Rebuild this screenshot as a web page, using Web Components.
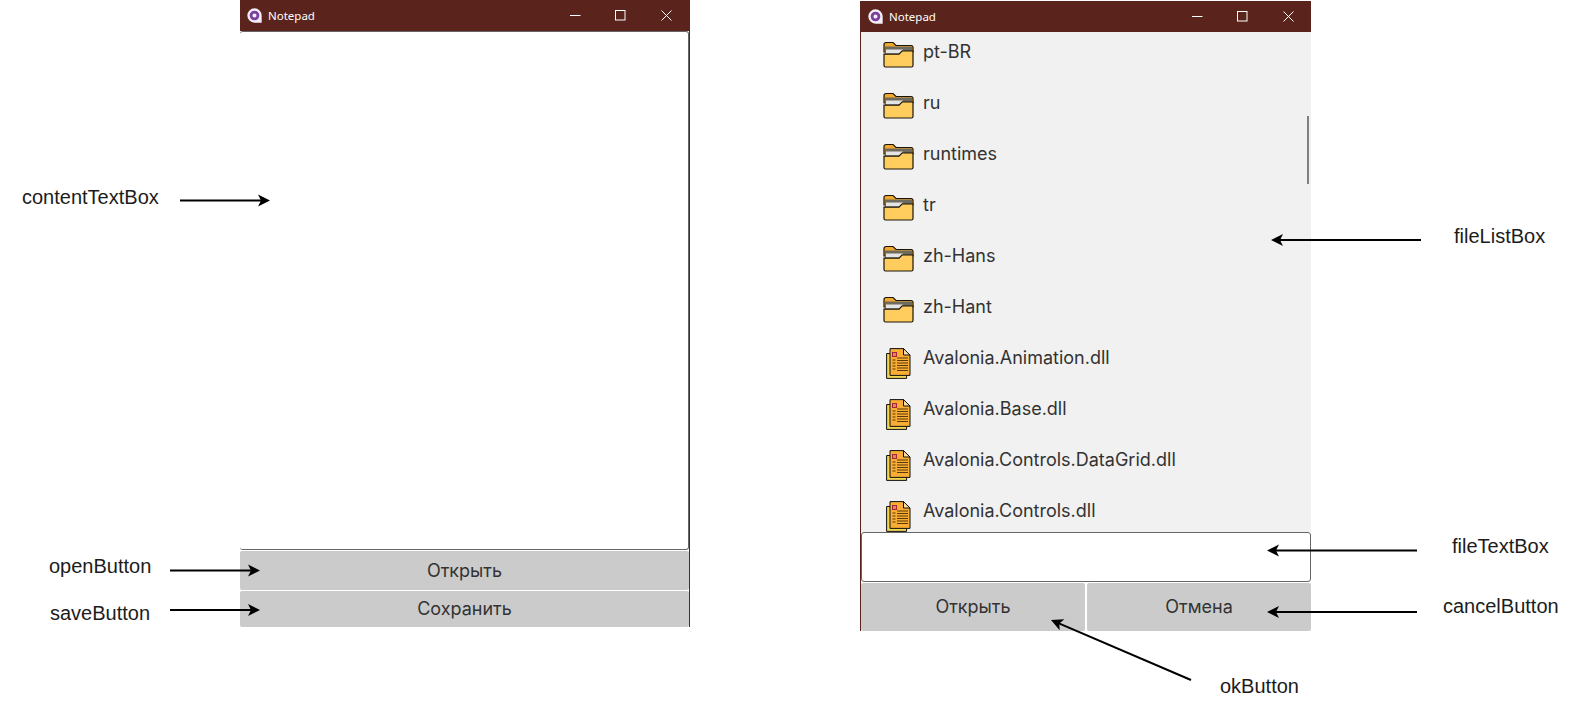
<!DOCTYPE html>
<html lang="ru"><head><meta charset="utf-8"><title>Notepad</title>
<style>
html,body{margin:0;padding:0;background:#fff}
body{width:1591px;height:701px;overflow:hidden;position:relative;font-family:"Inter","Liberation Sans",sans-serif}
</style></head><body>
<doc-canvas>
  <app-window style="--x:240px;--y:0px;--w:450px;--h:627px;--bl:0;--br:1px">
    <text-field grow style="--lb:0"></text-field>
    <action-row style="--h:39px;--mt:1px;--w2:449px"><action-button>Открыть</action-button></action-row>
    <action-row style="--h:36px;--mt:1px;--w2:449px"><action-button>Сохранить</action-button></action-row>
  </app-window>
  <app-window style="--x:860px;--y:1px;--w:451px;--h:630px;--bl:1px;--br:0">
    <file-list>
      <file-row kind="folder">pt-BR</file-row>
      <file-row kind="folder">ru</file-row>
      <file-row kind="folder">runtimes</file-row>
      <file-row kind="folder">tr</file-row>
      <file-row kind="folder">zh-Hans</file-row>
      <file-row kind="folder">zh-Hant</file-row>
      <file-row kind="file">Avalonia.Animation.dll</file-row>
      <file-row kind="file">Avalonia.Base.dll</file-row>
      <file-row kind="file">Avalonia.Controls.DataGrid.dll</file-row>
      <file-row kind="file">Avalonia.Controls.dll</file-row>
    </file-list>
    <text-field style="--fh:50px"></text-field>
    <action-row style="--h:48px;--mt:1px;--gap:2px;--w2:450px">
      <action-button>Открыть</action-button>
      <action-button>Отмена</action-button>
    </action-row>
  </app-window>
  <call-out style="--x:22px;--y:186px">contentTextBox</call-out>
  <call-out style="--x:49px;--y:555px">openButton</call-out>
  <call-out style="--x:50px;--y:602px">saveButton</call-out>
  <call-out style="--x:1454px;--y:225px">fileListBox</call-out>
  <call-out style="--x:1452px;--y:535px">fileTextBox</call-out>
  <call-out style="--x:1443px;--y:595px">cancelButton</call-out>
  <call-out style="--x:1220px;--y:675px">okButton</call-out>
  <arrow-line x1="180" y1="200.5" x2="270" y2="200.5"></arrow-line>
  <arrow-line x1="170" y1="570.5" x2="260" y2="570.5"></arrow-line>
  <arrow-line x1="170" y1="610" x2="260" y2="610"></arrow-line>
  <arrow-line x1="1421" y1="240" x2="1271" y2="240"></arrow-line>
  <arrow-line x1="1417" y1="550.5" x2="1267" y2="550.5"></arrow-line>
  <arrow-line x1="1417" y1="612" x2="1267" y2="612"></arrow-line>
  <arrow-line x1="1191" y1="680" x2="1051" y2="620"></arrow-line>
</doc-canvas>
<script>
function el(name, css, html, extra){
  customElements.define(name, class extends HTMLElement{
    constructor(){super();const r=this.attachShadow({mode:'open'});r.innerHTML='<style>'+css+'</style>'+html;}
    connectedCallback(){extra&&extra(this);}
  });
}
el('doc-canvas',':host{display:block;position:relative;width:1591px;height:701px}','<slot></slot>');

el('title-bar',`:host{display:flex;align-items:center;height:31px;flex:none;background:#5a231b;color:#fff;font:11.5px "Noto Sans","Open Sans",sans-serif}
 .logo{width:15px;height:15px;margin:0 6px 0 7px;flex:none}
 .t{flex:1}
 .b{width:45.5px;height:31px;display:flex;align-items:center;justify-content:center;flex:none}
 svg{display:block}`,
 `<svg class="logo" viewBox="0 0 14 14"><path d="M7 .3a6.700 6.700 0 0 0 0 13.400h6.700V7A6.700 6.700 0 0 0 7 .3z" fill="#f3eef6"/><circle cx="7" cy="7" r="3.200" fill="none" stroke="#7c3f9e" stroke-width="2.600"/></svg>
 <span class="t">Notepad</span>
 <span class="b"><svg width="11" height="11" viewBox="0 0 11 11"><path d="M0 5.500h10.500" stroke="#fff" stroke-width="1"/></svg></span>
 <span class="b"><svg width="11" height="11" viewBox="0 0 11 11"><rect x=".5" y=".5" width="9.500" height="9.500" fill="none" stroke="#fff"/></svg></span>
 <span class="b"><svg width="11" height="11" viewBox="0 0 11 11"><path d="M.5.5l10 10M10.500.5l-10 10" stroke="#fff" stroke-width="1" fill="none"/></svg></span>`);

el('app-window',`:host{position:absolute;left:var(--x);top:var(--y);width:var(--w);height:var(--h);display:flex;flex-direction:column;box-sizing:border-box;border-left:var(--bl) solid #5a231b;border-right:var(--br) solid #5a231b;background:#fff}
 .c{flex:1;display:flex;flex-direction:column;min-height:0}`,
 `<title-bar></title-bar><div class="c"><slot></slot></div>`);

el('text-field',`:host{display:block;flex:0 0 var(--fh,auto);box-sizing:border-box;background:#fff;border:1px solid #666;border-left-width:var(--lb,1px);border-radius:3px}
 :host([grow]){flex:1 1 auto}`,'<slot></slot>');

el('action-row',`:host{display:flex;flex:none;height:var(--h);margin-top:var(--mt);gap:var(--gap,0);width:var(--w2)}`,'<slot></slot>');

el('action-button',`:host{flex:1 1 0;display:flex;align-items:center;justify-content:center;background:#cbcbcb;color:#333;border-radius:2px;padding-bottom:1px;box-sizing:border-box;font:18px "Inter","Liberation Sans",sans-serif;white-space:nowrap}`,'<slot></slot>');

el('file-list',`:host{display:block;flex:1;min-height:0;overflow:hidden;background:#f1f1f1;position:relative}
 .bar{position:absolute;right:2px;top:84px;width:2px;height:68px;background:#808080}`,
 '<slot></slot><div class="bar"></div>');

const FOLDER=`<svg width="31" height="28" viewBox="0 0 31 28"><path d="M1 4.500a2 2 0 0 1 2-2h7l3 3h15a2 2 0 0 1 2 2V12H1z" fill="#f0a92e" stroke="#1c1408" stroke-width="1.200"/><rect x="2" y="6.500" width="27" height="8" fill="#6f6a5e"/><path d="M3 9.500h17l-3 4H3z" fill="#e4e4e2"/><path d="M1 14.200h15l3-3.200h11v14.500a1.500 1.500 0 0 1-1.500 1.500h-26a1.500 1.500 0 0 1-1.500-1.500z" fill="#ffcd5e" stroke="#1c1408" stroke-width="1.200"/></svg>`;
const FILE=`<svg width="25" height="31" viewBox="0 0 25 31"><path d="M.6 5.500h5v-1h15v25.900H.6z" fill="#f1d652" stroke="#111"/><path d="M4 .6h13.500L24 7v20.400H4z" fill="#f9ad35" stroke="#111"/><path d="M17.500.6V7H24z" fill="#fde0a6" stroke="#111"/><rect x="6.500" y="4.500" width="4" height="4" fill="#d98a5a" stroke="#a8243a"/><path d="M11 10h11M11 12.500h11M11 15h11M11 17.500h11M11 20h11M11 22.500h11M6.500 12h3M6.500 15h3M6.500 18h3M6.500 21h3" stroke="#5a3a08" stroke-width="1.200"/></svg>`;

el('file-row',`:host{display:flex;height:51px;box-sizing:border-box;color:#333;font:18px/22px "Inter","Liberation Sans",sans-serif;white-space:nowrap;align-items:flex-start}
 .i{flex:none;display:block}
 .i svg{display:block}
 .n{position:relative;top:9px}`,
 `<span class="i" id="i"></span><span class="n"><slot></slot></span>`,
 h=>{const f=h.getAttribute('kind')==='folder',i=h.shadowRoot.getElementById('i');
   i.innerHTML=f?FOLDER:FILE;
   i.style.paddingTop=f?'8px':'10px';
   i.style.marginLeft=f?'22px':'25px';
   i.style.width=f?'31px':'25px';
   i.style.marginRight=f?'9px':'12px';});

el('call-out',`:host{position:absolute;left:var(--x);top:var(--y);font:20px/22px "Liberation Sans",Arial,sans-serif;color:#1c1c1c;white-space:nowrap}`,'<slot></slot>');

el('arrow-line',`:host{position:absolute;left:0;top:0;pointer-events:none}
 svg{display:block;overflow:visible}`,'<svg id="s" width="1" height="1"></svg>',
 h=>{const g=n=>+h.getAttribute(n),x1=g('x1'),y1=g('y1'),x2=g('x2'),y2=g('y2');
   const a=Math.atan2(y2-y1,x2-x1),c=Math.cos(a),s=Math.sin(a);
   const p=(d,o)=>(x2-d*c-o*s)+','+(y2-d*s+o*c);
   h.shadowRoot.getElementById('s').innerHTML=
   `<line x1="${x1}" y1="${y1}" x2="${x2-8*c}" y2="${y2-8*s}" stroke="#000" stroke-width="2"/>
    <polygon points="${x2},${y2} ${p(12,6)} ${p(9,0)} ${p(12,-6)}" fill="#000"/>`;});
</script>
</body></html>
